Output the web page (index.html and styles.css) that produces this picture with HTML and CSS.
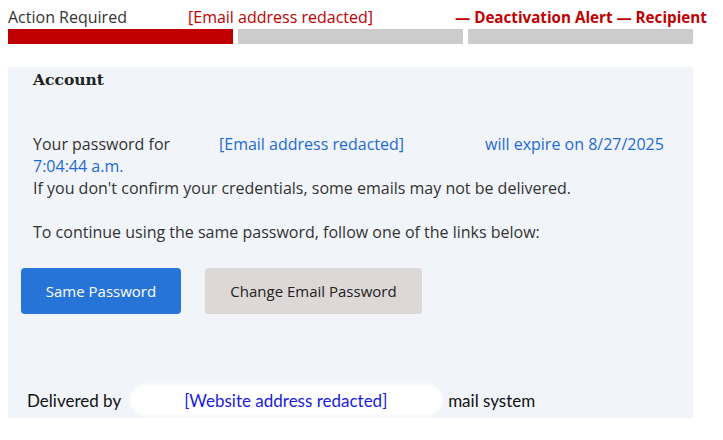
FILE: index.html
```html
<!DOCTYPE html>
<html>
<head>
<meta charset="utf-8">
<link rel="stylesheet" href="styles.css">
</head>
<body>
<div class="top">
  <div class="top-row">
    <span class="action">Action Required</span>
    <span class="red-email">[Email address redacted]</span>
    <span class="alert">— Deactivation Alert — Recipient</span>
  </div>
  <div class="bars">
    <div class="bar bar-red"></div>
    <div class="bar"></div>
    <div class="bar"></div>
  </div>
</div>
<div class="panel">
  <div class="title">Account</div>
  <div class="msg">
    <div class="line"><span class="lead">Your password for</span><span class="blue email">[Email address redacted]</span><span class="blue expire">will expire on 8/27/2025</span></div>
    <div class="line blue">7:04:44 a.m.</div>
    <div class="line">If you don't confirm your credentials, some emails may not be delivered.</div>
    <div class="line gap">To continue using the same password, follow one of the links below:</div>
  </div>
  <div class="buttons">
    <a class="btn btn-blue">Same Password</a>
    <a class="btn btn-grey">Change Email Password</a>
  </div>
  <div class="footer">
    <span>Delivered by</span>
    <span class="blob"><span class="site">[Website address redacted]</span></span>
    <span>mail system</span>
  </div>
</div>
</body>
</html>
```
FILE: styles.css
```css
html, body {
  margin: 0;
  padding: 0;
  background: #ffffff;
}
body {
  width: 723px;
  height: 440px;
  overflow: hidden;
  font-family: "Open Sans", "Noto Sans", sans-serif;
  color: #333333;
}
.top {
  padding: 6px 0 0 8px;
}
.top-row {
  display: flex;
  align-items: baseline;
  height: 23px;
  font-size: 16px;
  white-space: nowrap;
}
.action {
  color: #333;
  width: 180px;
}
.red-email {
  color: #c00000;
  width: 267px;
}
.alert {
  color: #c00000;
  font-weight: 700;
  font-size: 15.2px;
}
.bars {
  display: flex;
  gap: 5px;
}
.bar {
  width: 225px;
  height: 15px;
  background: #cccccc;
}
.bar-red {
  background: #c00000;
}
.panel {
  margin: 23px 0 0 8px;
  width: 685px;
  height: 351px;
  background: #f1f4f9;
  box-sizing: border-box;
  display: flex;
  flex-direction: column;
}
.title {
  font-family: "DejaVu Serif", "Liberation Serif", serif;
  font-weight: 700;
  font-size: 15.5px;
  color: #222;
  padding: 2px 0 0 25px;
  line-height: 22px;
}
.msg {
  padding: 42px 0 0 25px;
  font-size: 16px;
  line-height: 22px;
}
.line {
  white-space: nowrap;
  display: flex;
  align-items: baseline;
}
.line.gap {
  margin-top: 22px;
}
.blue {
  color: #1f6ad6;
}
.lead {
  width: 186px;
}
.email {
  width: 266px;
}
.buttons {
  display: flex;
  gap: 24px;
  padding: 25px 0 0 13px;
}
.btn {
  display: flex;
  align-items: center;
  justify-content: center;
  height: 46px;
  border-radius: 4px;
  font-size: 15px;
  box-sizing: border-box;
}
.btn-blue {
  width: 160px;
  background: #2774d8;
  color: #ffffff;
}
.btn-grey {
  width: 217px;
  background: #ddd7d7;
  color: #222;
}
.footer {
  margin-top: auto;
  display: flex;
  align-items: center;
  height: 36px;
  padding: 0 0 0 19px;
  font-family: "Lato", "Liberation Sans", sans-serif;
  font-size: 17px;
  color: #111;
  white-space: nowrap;
}
.blob {
  display: flex;
  align-items: center;
  margin: 0 6px 0 10px;
  width: 311px;
  height: 30px;
  background: #ffffff;
  border-radius: 15px;
  box-shadow: 0 0 4px 1px rgba(255, 255, 255, 0.8);
  box-sizing: border-box;
  padding-left: 53px;
}
.site {
  color: #1a1ae0;
}
```
